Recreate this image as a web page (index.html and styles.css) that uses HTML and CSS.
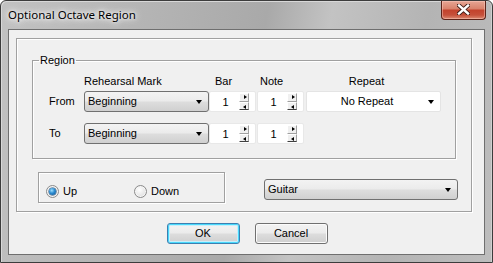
FILE: index.html
```html
<!DOCTYPE html>
<html>
<head>
<meta charset="utf-8">
<link rel="stylesheet" href="styles.css">
</head>
<body>
<div class="window">
  <div class="titlebar">
    <span class="title">Optional Octave Region</span>
    <div class="close">
      <svg width="13" height="11" viewBox="0 0 13 11">
        <path d="M2 1.5 L11 9.5 M11 1.5 L2 9.5" stroke="#3b1a14" stroke-width="4.2" stroke-linecap="square" fill="none"/>
        <path d="M2 1.5 L11 9.5 M11 1.5 L2 9.5" stroke="#ffffff" stroke-width="2.4" stroke-linecap="square" fill="none"/>
      </svg>
    </div>
  </div>
  <div class="client">
    <div class="outer">
      <fieldset class="region">
        <legend>Region</legend>
        <div class="grid">
          <span></span>
          <span class="head">Rehearsal Mark</span>
          <span class="head bar-h">Bar</span>
          <span class="head note-h">Note</span>
          <span class="head repeat-h">Repeat</span>

          <span class="lbl">From</span>
          <div class="combo mark"><span>Beginning</span><i class="arrow"></i></div>
          <div class="spin"><span class="val">1</span><span class="spinbtn"><i class="up"></i><i class="dn"></i></span></div>
          <div class="spin"><span class="val">1</span><span class="spinbtn"><i class="up"></i><i class="dn"></i></span></div>
          <div class="combo flat repeat"><span class="centered">No Repeat</span><i class="arrow"></i></div>

          <span class="lbl">To</span>
          <div class="combo mark"><span>Beginning</span><i class="arrow"></i></div>
          <div class="spin"><span class="val">1</span><span class="spinbtn"><i class="up"></i><i class="dn"></i></span></div>
          <div class="spin"><span class="val">1</span><span class="spinbtn"><i class="up"></i><i class="dn"></i></span></div>
          <span></span>
        </div>
      </fieldset>
      <div class="lower">
        <div class="radiogroup">
          <label class="radio up-opt"><i class="dot on"></i>Up</label>
          <label class="radio"><i class="dot"></i>Down</label>
        </div>
        <div class="combo guitar"><span>Guitar</span><i class="arrow"></i></div>
      </div>
    </div>
    <div class="buttons">
      <div class="btn default">OK</div>
      <div class="btn">Cancel</div>
    </div>
  </div>
</div>
</body>
</html>
```
FILE: styles.css
```css
* { box-sizing: border-box; }
html, body { margin: 0; padding: 0; }
body {
  width: 493px;
  height: 263px;
  overflow: hidden;
  font-family: "Liberation Sans", Arial, sans-serif;
  font-size: 11px;
  color: #000;
}
.window {
  width: 493px;
  height: 263px;
  border: 1px solid #3c3c3c;
  border-radius: 6px 6px 0 0;
  background: linear-gradient(100deg, #c2c2c2 0%, #b3b3b3 30%, #a9a9a9 50%, #c3c3c3 62%, #b4b4b4 80%, #bdbdbd 100%);
  box-shadow: inset 1px 1px 0 #d8d8d8, inset -1px 0 0 #d0d0d0;
  display: flex;
  flex-direction: column;
}
.titlebar {
  height: 28px;
  display: flex;
  justify-content: space-between;
  align-items: flex-start;
  padding: 0 6px 0 7px;
}
.title {
  font-family: "Noto Sans", "Open Sans", sans-serif;
  font-size: 11.5px;
  line-height: 16px;
  margin-top: 6px;
  color: #000;
  text-shadow: 0 0 6px #fff, 0 0 10px #fff, 0 0 3px #eee;
}
.close {
  width: 45px;
  height: 19px;
  border: 1px solid #5c2319;
  border-top: none;
  border-radius: 0 0 4px 4px;
  background: linear-gradient(#e6a594 0%, #d9836d 42%, #c3432d 52%, #c6503a 78%, #dc8a72 100%);
  box-shadow: inset 0 0 0 1px rgba(255,210,200,0.45);
  display: flex;
  align-items: center;
  justify-content: center;
  padding-bottom: 1px;
}
.client {
  margin: 0 7px;
  height: 226px;
  border: 1px solid #6f6f6f;
  background: #f0f0f0;
  display: flex;
  flex-direction: column;
}
.outer {
  margin: 8px 12px 0 7px;
  height: 174px;
  border: 1px solid #a0a0a0;
  box-shadow: 1px 1px 0 #fff, inset 1px 1px 0 #fff;
  padding: 0 0 0 15px;
}
.region {
  margin: 15px 0 0 0;
  width: 424px;
  border: 1px solid #a0a0a0;
  box-shadow: inset 1px 1px 0 #fff, 1px 1px 0 #fff;
  padding: 8px 0 14px 0;
  min-inline-size: 0;
}
.region legend {
  margin-left: 6px;
  padding: 0 1px;
  line-height: 13px;
  height: 13px;
}
.grid {
  display: grid;
  grid-template-columns: 51px 125px 48px 49px 135px;
  grid-template-rows: 16px 32px 21px;
  align-items: start;
}
.head { line-height: 13px; }
.bar-h { padding-left: 6px; }
.note-h { padding-left: 3px; }
.repeat-h { text-align: center; padding-right: 14px; }
.lbl { padding-left: 16px; line-height: 21px; }
.combo {
  height: 21px;
  border: 1px solid #707070;
  border-radius: 3px;
  background: linear-gradient(#f3f3f3 0%, #ebebeb 48%, #dddddd 52%, #d0d0d0 100%);
  display: flex;
  align-items: center;
  padding: 0 0 0 3px;
  position: relative;
  line-height: 13px;
}
.combo .arrow {
  position: absolute;
  right: 6px;
  top: 8px;
  width: 0;
  height: 0;
  border-left: 3.5px solid transparent;
  border-right: 3.5px solid transparent;
  border-top: 4px solid #000;
}
.mark { width: 125px; }
.flat {
  background: #fff;
  border: 1px solid #e4e4e4;
  border-radius: 2px;
}
.repeat { width: 135px; }
.repeat .arrow { right: 6px; }
.centered { flex: 1; text-align: center; padding-right: 16px; }
.spin {
  width: 47px;
  height: 21px;
  background: #fff;
  border: 1px solid #e8e8e8;
  border-radius: 2px;
  display: flex;
  align-items: center;
  padding-right: 6px;
}
.spin .val { flex: 1; text-align: center; padding-left: 2px; }
.spinbtn {
  width: 10px;
  height: 17px;
  display: flex;
  flex-direction: column;
}
.spinbtn i {
  flex: 1;
  display: block;
  position: relative;
  background: #f0f0f0;
  border-top: 1px solid #fff;
  border-left: 1px solid #fff;
  border-right: 1px solid #a0a0a0;
  border-bottom: 1px solid #a0a0a0;
}
.spinbtn i.dn { border-bottom-color: #404040; }
.spinbtn i::after {
  content: "";
  position: absolute;
  top: 1px;
  left: 3px;
  width: 0;
  height: 0;
  border-top: 2.5px solid transparent;
  border-bottom: 2.5px solid transparent;
}
.spinbtn i.up::after { border-left: 3px solid #000; left: 4px; }
.spinbtn i.dn::after { border-right: 3px solid #000; top: 2px; left: 3px; }
.lower {
  display: flex;
  align-items: flex-start;
  margin-top: 13px;
  padding-left: 6px;
}
.radiogroup {
  width: 187px;
  height: 31px;
  border: 1px solid #a0a0a0;
  box-shadow: 1px 1px 0 #fff, inset 1px 1px 0 #fff;
  display: flex;
  align-items: flex-start;
  padding: 12px 0 0 7px;
}
.radio {
  display: flex;
  align-items: center;
  line-height: 13px;
  gap: 4px;
}
.up-opt { width: 88px; }
.dot {
  width: 13px;
  height: 13px;
  border-radius: 50%;
  border: 1px solid #8a8a8a;
  background: radial-gradient(circle at 40% 35%, #ffffff 0%, #e8e8e8 55%, #cfcfcf 100%);
  box-shadow: inset 0 0 0 1px #f6f6f6;
  position: relative;
  display: block;
}
.dot.on::after {
  content: "";
  position: absolute;
  left: 2px;
  top: 2px;
  width: 7px;
  height: 7px;
  border-radius: 50%;
  background: radial-gradient(circle at 40% 35%, #9fe0ff 0%, #2b8bd0 45%, #0c4f8e 100%);
  box-shadow: 0 0 0 0.5px #1e4c74;
}
.guitar {
  width: 194px;
  margin-left: 39px;
  margin-top: 7px;
}
.buttons {
  display: flex;
  justify-content: center;
  gap: 15px;
  margin-top: 11px;
  padding-left: 1px;
}
.btn {
  width: 73px;
  height: 21px;
  border: 1px solid #707070;
  border-radius: 3px;
  background: linear-gradient(#f3f3f3 0%, #ebebeb 48%, #dddddd 52%, #cfcfcf 100%);
  box-shadow: inset 0 0 0 1px #fbfbfb;
  display: flex;
  align-items: center;
  justify-content: center;
  line-height: 13px;
}
.btn.default {
  border-color: #3c7fb1;
  box-shadow: inset 0 0 0 1px #48d8fb, inset 0 0 0 2px #c6eefb;
}
```
